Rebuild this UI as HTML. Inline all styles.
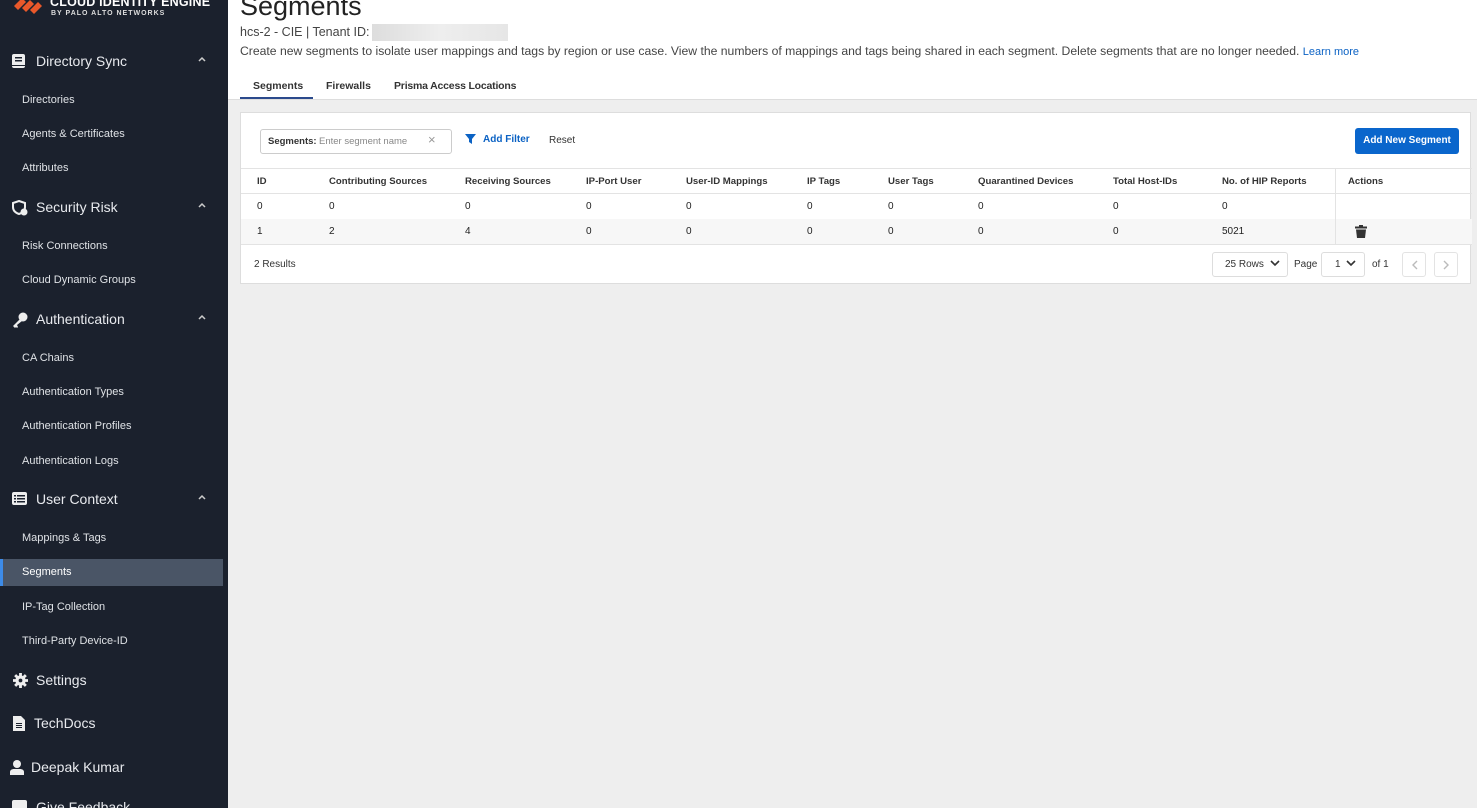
<!DOCTYPE html>
<html><head><meta charset="utf-8"><style>
*{box-sizing:border-box;margin:0;padding:0}
html,body{width:1477px;height:808px;overflow:hidden}
body{font-family:"Liberation Sans",sans-serif;background:#eeeeee;position:relative}
.sb{position:absolute;left:0;top:0;width:228px;height:808px;background:#1b212d;color:#e6e8ec;overflow:hidden}
.sb .h{position:absolute;left:0;width:228px;font-size:14px;color:#e8eaee}
.sb .h .ic{position:absolute;left:12px;top:0}
.sb .h .t{position:absolute;left:36px;top:-1px}
.sb .h .c{position:absolute;left:198px;top:2px}
.sb .s{position:absolute;left:22px;font-size:11px;color:#dfe2e6}
.sel{position:absolute;left:0;top:559px;width:223px;height:27px;background:#4a5566;border-left:3px solid #3d8be8}
.main{position:absolute;left:228px;top:0;width:1249px;height:100px;background:#fff}
.abs{position:absolute;white-space:nowrap}
.card{position:absolute;left:240px;top:112px;width:1231px;height:172px;background:#fff;border:1px solid #ddd}
.th,.td{position:absolute;font-size:10px;color:#222;white-space:nowrap}
.th{font-weight:bold;color:#333;font-size:9.6px}
</style></head><body>
<div class="sb">
 <svg style="position:absolute;left:12px;top:-6px" width="32" height="24" viewBox="0 0 32 24"><g fill="#e9582a"><path d="M2 12 L10 4 L14 8 L6 16Z"/><path d="M10 14 L18 6 L22 10 L14 18Z"/><path d="M18 16 L26 8 L30 12 L22 20Z"/></g></svg>
 <div class="abs" style="left:50px;top:-5px;font-size:12.5px;font-weight:bold;color:#fff;letter-spacing:.2px">CLOUD IDENTITY ENGINE</div>
 <div class="abs" style="left:51px;top:10px;font-size:7px;font-weight:bold;color:#ddd;letter-spacing:1px">BY PALO ALTO NETWORKS</div>
 <div class="h" style="top:54px"><svg class="ic" width="14" height="15" viewBox="0 0 14 15"><rect x="0" y="0" width="13" height="14" rx="2" fill="#eee"/><rect x="3" y="3" width="7" height="1.5" fill="#1b212d"/><rect x="3" y="6" width="7" height="1.5" fill="#1b212d"/><rect x="0" y="11" width="13" height="1" fill="#1b212d"/></svg><span class="t">Directory Sync</span><svg class="c" width="8" height="6" viewBox="0 0 8 6"><path d="M1 5L4 2L7 5" fill="none" stroke="#ccc" stroke-width="1.5"/></svg></div>
 <div class="s" style="top:94px">Directories</div>
 <div class="s" style="top:128px">Agents &amp; Certificates</div>
 <div class="s" style="top:162px">Attributes</div>
 <div class="h" style="top:200px"><svg class="ic" width="16" height="16" viewBox="0 0 16 16"><path d="M7 1 L13 3 V7 C13 11 10 13 7 14 C4 13 1 11 1 7 V3Z" fill="none" stroke="#eee" stroke-width="2"/><circle cx="12" cy="12" r="3.5" fill="#eee"/></svg><span class="t">Security Risk</span><svg class="c" width="8" height="6" viewBox="0 0 8 6"><path d="M1 5L4 2L7 5" fill="none" stroke="#ccc" stroke-width="1.5"/></svg></div>
 <div class="s" style="top:240px">Risk Connections</div>
 <div class="s" style="top:274px">Cloud Dynamic Groups</div>
 <div class="h" style="top:312px"><svg class="ic" width="16" height="16" viewBox="0 0 16 16"><circle cx="11" cy="5" r="4.5" fill="#eee"/><path d="M8 7 L1 14 L3 16 L4 15 L5 16 L6 15 L5 13 L10 9Z" fill="#eee"/></svg><span class="t">Authentication</span><svg class="c" width="8" height="6" viewBox="0 0 8 6"><path d="M1 5L4 2L7 5" fill="none" stroke="#ccc" stroke-width="1.5"/></svg></div>
 <div class="s" style="top:352px">CA Chains</div>
 <div class="s" style="top:386px">Authentication Types</div>
 <div class="s" style="top:420px">Authentication Profiles</div>
 <div class="s" style="top:455px">Authentication Logs</div>
 <div class="h" style="top:492px"><svg class="ic" width="15" height="14" viewBox="0 0 15 14"><rect width="15" height="13" rx="2" fill="#eee"/><g fill="#1b212d"><rect x="2" y="3" width="2" height="1.5"/><rect x="5" y="3" width="8" height="1.5"/><rect x="2" y="6" width="2" height="1.5"/><rect x="5" y="6" width="8" height="1.5"/><rect x="2" y="9" width="2" height="1.5"/><rect x="5" y="9" width="8" height="1.5"/></g></svg><span class="t">User Context</span><svg class="c" width="8" height="6" viewBox="0 0 8 6"><path d="M1 5L4 2L7 5" fill="none" stroke="#ccc" stroke-width="1.5"/></svg></div>
 <div class="s" style="top:532px">Mappings &amp; Tags</div>
 <div class="sel"></div>
 <div class="s" style="top:566px;color:#fff">Segments</div>
 <div class="s" style="top:601px">IP-Tag Collection</div>
 <div class="s" style="top:635px">Third-Party Device-ID</div>
 <div class="h" style="top:673px"><svg class="ic" style="left:13px" width="15" height="15" viewBox="0 0 16 16"><circle cx="8" cy="8" r="5.5" fill="#eee"/><g stroke="#eee" stroke-width="3"><path d="M8 0V16M0 8H16M2.3 2.3L13.7 13.7M13.7 2.3L2.3 13.7"/></g><circle cx="8" cy="8" r="2" fill="#1b212d"/></svg><span class="t">Settings</span></div>
 <div class="h" style="top:716px"><svg class="ic" style="left:13px" width="12" height="15" viewBox="0 0 12 15"><path d="M0 0H8L12 4V15H0Z" fill="#eee"/><g fill="#1b212d"><rect x="3" y="7" width="6" height="1"/><rect x="3" y="9" width="6" height="1"/><rect x="3" y="11" width="6" height="1"/></g></svg><span class="t" style="left:34px">TechDocs</span></div>
 <div class="h" style="top:760px"><svg class="ic" style="left:10px" width="14" height="15" viewBox="0 0 14 15"><circle cx="7" cy="4" r="4" fill="#eee"/><path d="M0 15V12C0 10 2 9 4 9H10C12 9 14 10 14 12V15Z" fill="#eee"/></svg><span class="t" style="left:31px">Deepak Kumar</span></div>
 <div class="h" style="top:800px"><svg class="ic" width="15" height="12"><rect width="15" height="12" rx="2" fill="#eee"/></svg><span class="t">Give Feedback</span></div>
</div>

<div class="main">
 <div class="abs" style="left:12px;top:-9px;font-size:27px;color:#222">Segments</div>
 <div class="abs" style="left:12px;top:25px;font-size:12.5px;color:#444">hcs-2 - CIE | Tenant ID:</div>
 <div class="abs" style="left:144px;top:24px;width:136px;height:17px;background:linear-gradient(90deg,#ddd,#eee,#e6e6e6)"></div>
 <div class="abs" style="left:12px;top:44px;font-size:12.2px;color:#444">Create new segments to isolate user mappings and tags by region or use case. View the numbers of mappings and tags being shared in each segment. Delete segments that are no longer needed. <span style="color:#0b62c4;font-size:11px">Learn more</span></div>
 <div class="abs" style="left:25px;top:80px;font-size:10.5px;font-weight:bold;color:#333">Segments</div>
 <div class="abs" style="left:12px;top:97px;width:73px;height:3px;background:#2b4a8c"></div>
 <div class="abs" style="left:98px;top:80px;font-size:10.5px;font-weight:bold;color:#333">Firewalls</div>
 <div class="abs" style="left:166px;top:80px;font-size:10.5px;font-weight:bold;color:#333;letter-spacing:-.2px">Prisma Access Locations</div>
 <div class="abs" style="left:0;top:99px;width:1249px;height:1px;background:#ddd"></div>
</div>

<div class="card">
 <div class="abs" style="left:19px;top:16px;width:192px;height:25px;border:1px solid #ccc;border-radius:3px"></div>
 <div class="abs" style="left:27px;top:23px;font-size:9.5px;font-weight:bold;color:#333">Segments:</div>
 <div class="abs" style="left:78px;top:23px;font-size:9.5px;color:#888">Enter segment name</div>
 <div class="abs" style="left:187px;top:19px;font-size:13px;color:#999">×</div>
 <svg class="abs" style="left:224px;top:21px" width="11" height="10" viewBox="0 0 11 10"><path d="M0 0H11L7 5V10L4 8V5Z" fill="#0b62c4"/></svg>
 <div class="abs" style="left:242px;top:21px;font-size:10px;font-weight:bold;color:#0b62c4">Add Filter</div>
 <div class="abs" style="left:308px;top:22px;font-size:10px;color:#333">Reset</div>
 <div class="abs" style="left:1114px;top:15px;width:104px;height:26px;background:#0a66cc;border-radius:3px;color:#fff;font-size:10px;font-weight:bold;text-align:center;line-height:26px">Add New Segment</div>
 <div class="abs" style="left:0;top:55px;width:1231px;height:1px;background:#e3e3e3"></div>
 <div class="abs" style="left:0;top:80px;width:1231px;height:1px;background:#e3e3e3"></div>
 <div class="abs" style="left:0;top:106px;width:1231px;height:25px;background:#f7f7f7"></div>
 <div class="abs" style="left:0;top:131px;width:1231px;height:1px;background:#e3e3e3"></div>
 <div class="abs" style="left:1094px;top:55px;width:1px;height:76px;background:#e3e3e3"></div>
 <div class="th" style="left:16px;top:63px">ID</div><div class="th" style="left:88px;top:63px">Contributing Sources</div><div class="th" style="left:224px;top:63px">Receiving Sources</div><div class="th" style="left:345px;top:63px">IP-Port User</div><div class="th" style="left:445px;top:63px">User-ID Mappings</div><div class="th" style="left:566px;top:63px">IP Tags</div><div class="th" style="left:647px;top:63px">User Tags</div><div class="th" style="left:737px;top:63px">Quarantined Devices</div><div class="th" style="left:872px;top:63px">Total Host-IDs</div><div class="th" style="left:981px;top:63px">No. of HIP Reports</div><div class="th" style="left:1107px;top:63px">Actions</div>
 <div class="td" style="left:16px;top:88px">0</div><div class="td" style="left:88px;top:88px">0</div><div class="td" style="left:224px;top:88px">0</div><div class="td" style="left:345px;top:88px">0</div><div class="td" style="left:445px;top:88px">0</div><div class="td" style="left:566px;top:88px">0</div><div class="td" style="left:647px;top:88px">0</div><div class="td" style="left:737px;top:88px">0</div><div class="td" style="left:872px;top:88px">0</div><div class="td" style="left:981px;top:88px">0</div>
 <div class="td" style="left:16px;top:113px">1</div><div class="td" style="left:88px;top:113px">2</div><div class="td" style="left:224px;top:113px">4</div><div class="td" style="left:345px;top:113px">0</div><div class="td" style="left:445px;top:113px">0</div><div class="td" style="left:566px;top:113px">0</div><div class="td" style="left:647px;top:113px">0</div><div class="td" style="left:737px;top:113px">0</div><div class="td" style="left:872px;top:113px">0</div><div class="td" style="left:981px;top:113px">5021</div>
 <svg class="abs" style="left:1114px;top:112px" width="12" height="13" viewBox="0 0 12 13"><rect x="4" y="0" width="4" height="2" fill="#333"/><rect x="0" y="1.5" width="12" height="2" fill="#333"/><path d="M1 4.5H11L10 13H2Z" fill="#333"/></svg>
 <div class="td" style="left:13px;top:146px;color:#333">2 Results</div>
 <div class="abs" style="left:971px;top:139px;width:76px;height:25px;border:1px solid #ddd;border-radius:3px;font-size:10px;color:#333;line-height:23px;padding-left:12px">25 Rows <svg width="10" height="7" viewBox="0 0 10 7" style="margin-left:3px"><path d="M1 1L5 5L9 1" fill="none" stroke="#333" stroke-width="1.6"/></svg></div>
 <div class="td" style="left:1053px;top:146px;color:#333">Page</div>
 <div class="abs" style="left:1080px;top:139px;width:44px;height:25px;border:1px solid #ddd;border-radius:3px;font-size:10px;color:#333;line-height:23px;padding-left:13px">1 <svg width="10" height="7" viewBox="0 0 10 7" style="margin-left:3px"><path d="M1 1L5 5L9 1" fill="none" stroke="#333" stroke-width="1.6"/></svg></div>
 <div class="td" style="left:1131px;top:146px;color:#333">of 1</div>
 <div class="abs" style="left:1161px;top:139px;width:24px;height:25px;border:1px solid #e3e3e3;border-radius:3px"><svg style="position:absolute;left:8px;top:7px" width="7" height="10" viewBox="0 0 7 10"><path d="M6 1L2 5L6 9" fill="none" stroke="#bbb" stroke-width="1.4"/></svg></div>
 <div class="abs" style="left:1193px;top:139px;width:24px;height:25px;border:1px solid #e3e3e3;border-radius:3px"><svg style="position:absolute;left:8px;top:7px" width="7" height="10" viewBox="0 0 7 10"><path d="M1 1L5 5L1 9" fill="none" stroke="#bbb" stroke-width="1.4"/></svg></div>
</div>
</body></html>
